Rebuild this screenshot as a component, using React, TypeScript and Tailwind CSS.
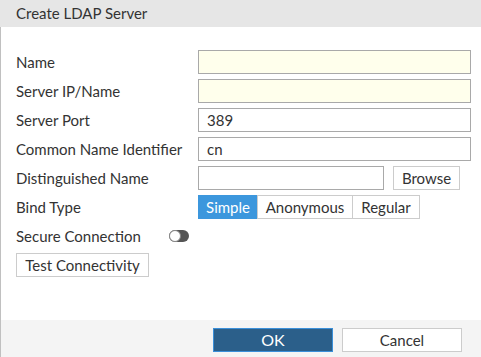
import React, { useState } from 'react';

const font = { fontFamily: 'Lato, "Noto Sans", sans-serif' };

export default function App() {
  const [bind, setBind] = useState('Simple');
  const [secure, setSecure] = useState(false);

  const inputCls = 'h-6 border border-[#a9a9a9] px-2 text-[15px] text-[#333] outline-none';

  return (
    <div style={font} className="flex h-[357px] w-[481px] flex-col bg-white text-[15px] text-[#333]">
      <div className="flex h-[27px] items-center bg-[#e6e6e6] pl-4 text-[#333]">Create LDAP Server</div>

      <div className="flex flex-1 flex-col border-l border-[#c0c0c0]">
        <div className="flex-1 pl-[15px] pr-[10px] pt-[23px]">
          <div className="grid grid-cols-[182px_1fr] gap-y-[5px]">
            <label className="flex h-6 items-center">Name</label>
            <input className={`${inputCls} w-full bg-[#ffffec]`} />

            <label className="flex h-6 items-center">Server IP/Name</label>
            <input className={`${inputCls} w-full bg-[#ffffec]`} />

            <label className="flex h-6 items-center">Server Port</label>
            <input className={`${inputCls} w-full bg-white`} defaultValue="389" />

            <label className="flex h-6 items-center">Common Name Identifier</label>
            <input className={`${inputCls} w-full bg-white`} defaultValue="cn" />

            <label className="flex h-6 items-center">Distinguished Name</label>
            <div className="flex h-6 items-center gap-[9px]">
              <input className={`${inputCls} w-[186px] shrink-0 bg-white`} />
              <button className="flex h-6 w-[67px] shrink-0 items-center justify-center border border-[#ccc] bg-white">Browse</button>
            </div>

            <label className="flex h-6 items-center">Bind Type</label>
            <div className="flex h-6">
              {[
                ['Simple', 'w-[60px]'],
                ['Anonymous', 'w-[96px]'],
                ['Regular', 'w-[68px]'],
              ].map(([name, w], i) => (
                <button
                  key={name}
                  onClick={() => setBind(name)}
                  className={`flex h-6 shrink-0 items-center justify-center border ${w} ${i > 0 ? '-ml-px' : ''} ${
                    bind === name ? 'border-[#3c97dd] bg-[#3c97dd] text-white' : 'border-[#ccc] bg-white text-[#333]'
                  }`}
                >
                  {name}
                </button>
              ))}
            </div>

            <div className="col-span-2 flex h-6 items-center">
              <span className="w-[153px]">Secure Connection</span>
              <button
                onClick={() => setSecure(!secure)}
                className={`relative h-3 w-5 rounded-full ${secure ? 'bg-[#3c97dd]' : 'bg-[#555]'}`}
              >
                <span
                  className={`absolute top-0 h-3 w-3 rounded-full border border-[#888] bg-white ${secure ? 'right-0' : 'left-0'}`}
                />
              </button>
            </div>

            <div className="col-span-2">
              <button className="flex h-6 w-[133px] items-center justify-center border border-[#ccc] bg-white">Test Connectivity</button>
            </div>
          </div>
        </div>

        <div className="flex h-[37px] items-start justify-end gap-[9px] bg-[#f4f4f4] pr-[19px] pt-2">
          <button className="flex h-6 w-[120px] items-center justify-center border border-[#3a8fd9] bg-[#2b5f8a] text-[16px] text-white">OK</button>
          <button className="flex h-6 w-[120px] items-center justify-center border border-[#ccc] bg-white text-[15px]">Cancel</button>
        </div>
      </div>
    </div>
  );
}
